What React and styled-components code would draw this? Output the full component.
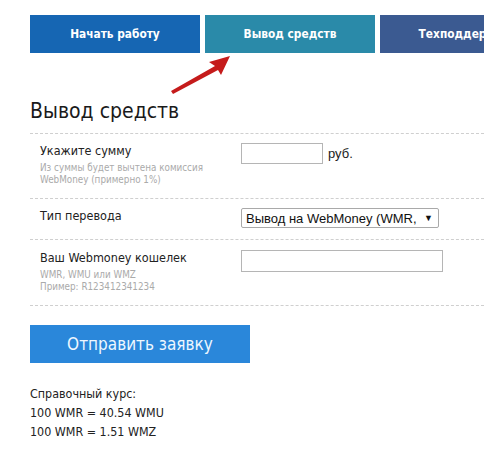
import React from "react";
import styled, { createGlobalStyle } from "styled-components";

const Global = createGlobalStyle`
  html, body { margin: 0; padding: 0; background: #fff; }
  body { font-family: "DejaVu Sans", "Liberation Sans", sans-serif; color: #222; }
`;

const Page = styled.div`
  position: relative;
  width: 484px;
  height: 459px;
  overflow: hidden;
  padding: 15px 0 0 30px;
  box-sizing: border-box;
`;

const Tabs = styled.div`
  display: flex;
  gap: 5px;
  width: 520px;
`;

const Tab = styled.div`
  flex: 0 0 170px;
  height: 38px;
  background: ${(p) => p.$bg};
  color: #fff;
  font-family: "DejaVu Sans", sans-serif;
  font-stretch: condensed;
  font-weight: bold;
  font-size: 11.8px;
  display: flex;
  align-items: center;
  justify-content: center;
  white-space: nowrap;
  overflow: hidden;
`;

const Arrow = styled.svg`
  position: absolute;
  left: 0;
  top: 0;
  pointer-events: none;
`;

const Title = styled.h1`
  margin: 45px 0 9px;
  font-family: "DejaVu Sans", sans-serif;
  font-stretch: condensed;
  font-weight: normal;
  font-size: 21px;
  line-height: 26px;
  color: #1a1a1a;
`;

const Form = styled.div`
  border-top: 1px dashed #cfcfcf;
  width: 454px;
`;

const Row = styled.div`
  display: grid;
  grid-template-columns: 211px 1fr;
  align-items: start;
  padding: ${(p) => p.$pad};
  border-bottom: 1px dashed #cfcfcf;
  box-sizing: border-box;
  height: ${(p) => p.$h}px;
`;

const LabelCol = styled.div`
  padding-left: 10px;
`;

const Label = styled.div`
  font-family: "DejaVu Sans", sans-serif;
  font-stretch: condensed;
  font-size: 12.5px;
  line-height: 16px;
  color: #222;
`;

const Hint = styled.div`
  margin-top: 3px;
  font-family: "DejaVu Sans", sans-serif;
  font-stretch: condensed;
  font-size: 9.8px;
  line-height: 12px;
  color: #aaa;
`;

const Field = styled.div`
  display: flex;
  align-items: center;
  gap: 5px;
  font-family: "Liberation Sans", Arial, sans-serif;
  font-size: 13px;
  color: #222;
`;

const Input = styled.div`
  width: ${(p) => p.$w}px;
  height: ${(p) => p.$h}px;
  border: 1px solid #b5b5b5;
  box-sizing: border-box;
  background: #fff;
`;

const Select = styled.div`
  width: 198px;
  height: 20px;
  border: 1px solid #a9a9a9;
  border-radius: 2px;
  box-sizing: border-box;
  display: flex;
  align-items: center;
  justify-content: space-between;
  padding: 0 5px 0 4px;
  font-family: "Liberation Sans", Arial, sans-serif;
  font-size: 13px;
  color: #111;
  white-space: nowrap;
  overflow: hidden;
`;

const Caret = styled.span`
  font-size: 9px;
  color: #111;
`;

const Submit = styled.div`
  margin-top: 19px;
  width: 220px;
  height: 38px;
  background: #2a87da;
  color: #eef7ff;
  font-family: "DejaVu Sans", sans-serif;
  font-stretch: condensed;
  font-size: 17px;
  display: flex;
  align-items: center;
  justify-content: center;
`;

const Rates = styled.div`
  margin-top: 21px;
  font-family: "DejaVu Sans", sans-serif;
  font-stretch: condensed;
  font-size: 12.4px;
  line-height: 19px;
  color: #222;
`;

export default function App() {
  return (
    <>
      <Global />
      <Page>
        <Tabs>
          <Tab $bg="#1666b3">Начать работу</Tab>
          <Tab $bg="#2a8aa9">Вывод средств</Tab>
          <Tab $bg="#3b5a91">Техподдержка</Tab>
        </Tabs>
        <Title>Вывод средств</Title>
        <Form>
          <Row $h={65} $pad="9px 0 0">
            <LabelCol>
              <Label>Укажите сумму</Label>
              <Hint>
                Из суммы будет вычтена комиссия
                <br />
                WebMoney (примерно 1%)
              </Hint>
            </LabelCol>
            <Field>
              <Input $w={82} $h={21} />
              <span>руб.</span>
            </Field>
          </Row>
          <Row $h={41} $pad="9px 0 0">
            <LabelCol>
              <Label>Тип перевода</Label>
            </LabelCol>
            <Field>
              <Select>
                <span>Вывод на WebMoney (WMR,</span>
                <Caret>▼</Caret>
              </Select>
            </Field>
          </Row>
          <Row $h={66} $pad="10px 0 0">
            <LabelCol>
              <Label>Ваш Webmoney кошелек</Label>
              <Hint>
                WMR, WMU или WMZ
                <br />
                Пример: R123412341234
              </Hint>
            </LabelCol>
            <Field>
              <Input $w={202} $h={22} />
            </Field>
          </Row>
        </Form>
        <Submit>Отправить заявку</Submit>
        <Rates>
          Справочный курс:
          <br />
          100 WMR = 40.54 WMU
          <br />
          100 WMR = 1.51 WMZ
        </Rates>
        <Arrow width="484" height="459" viewBox="0 0 484 459">
          <polygon
            points="230,56 209,62 215,66 171,91 173,94 218,70 221,75"
            fill="#c51b1b"
          />
        </Arrow>
      </Page>
    </>
  );
}
